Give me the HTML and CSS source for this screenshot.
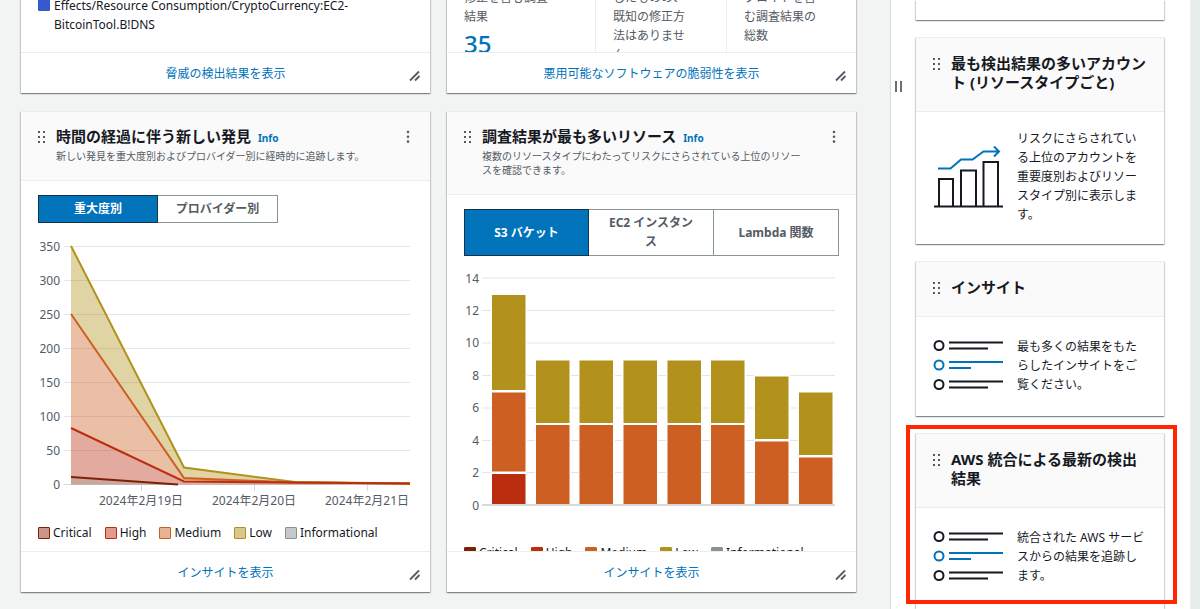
FILE: index.html
```html
<!DOCTYPE html>
<html lang="ja">
<head>
<meta charset="utf-8">
<title>Security Hub</title>
<link rel="stylesheet" href="styles.css">
</head>
<body>
<svg class="defs" aria-hidden="true">
  <symbol id="grip" viewBox="0 0 8 14">
    <path d="M0 1h2v2H0zM5 1h2v2H5zM0 6h2v2H0zM5 6h2v2H5zM0 11h2v2H0zM5 11h2v2H5z"/>
  </symbol>
  <symbol id="dots" viewBox="0 0 4 14">
    <circle cx="2" cy="2" r="1.300"/><circle cx="2" cy="6.800" r="1.300"/><circle cx="2" cy="11.600" r="1.300"/>
  </symbol>
  <symbol id="resize" viewBox="0 0 12 12">
    <path d="M1 10.500 10 1.500M6 10.500 10.500 6" fill="none" stroke="#545b64" stroke-width="1.800"/>
  </symbol>
  <symbol id="list" viewBox="0 0 70 62">
    <g fill="none" stroke-width="2">
      <g stroke="#16191f"><circle cx="6" cy="11.500" r="4.500"/><path d="M16 8.500h54M16 14.500h39"/><circle cx="6" cy="50.500" r="4.500"/><path d="M16 47.500h54M16 53.500h39"/></g>
      <g stroke="#0073bb"><circle cx="6" cy="31" r="4.500"/><path d="M16 28h54M16 34h22"/></g>
    </g>
  </symbol>
</svg>
<div class="layout">
  <main class="main">
    <div class="board">
      <section class="card">
        <div class="card-body threat">
          <span class="swatch swatch-blue"></span>
          <p>Effects/Resource Consumption/CryptoCurrency:EC2-BitcoinTool.B!DNS</p>
        </div>
        <footer class="card-footer">
          <a href="#">脅威の検出結果を表示</a>
          <button class="resize" aria-label="サイズ変更"><svg width="12" height="12"><use href="#resize"/></svg></button>
        </footer>
      </section>

      <section class="card">
        <div class="card-body stats">
          <div class="stat"><p>修正を含む調査結果</p><strong>35</strong></div>
          <div class="stat"><p>したものの、既知の修正方法はありません</p></div>
          <div class="stat"><p>プロイトを含む調査結果の総数</p></div>
        </div>
        <footer class="card-footer">
          <a href="#">悪用可能なソフトウェアの脆弱性を表示</a>
          <button class="resize" aria-label="サイズ変更"><svg width="12" height="12"><use href="#resize"/></svg></button>
        </footer>
      </section>

      <section class="card">
        <header class="card-header">
          <button class="grip" aria-label="移動"><svg width="8" height="14"><use href="#grip"/></svg></button>
          <div class="heading">
            <h2>時間の経過に伴う新しい発見 <a class="info" href="#">Info</a></h2>
            <p>新しい発見を重大度別およびプロバイダー別に経時的に追跡します。</p>
          </div>
          <button class="menu" aria-label="メニュー"><svg width="4" height="14"><use href="#dots"/></svg></button>
        </header>
        <div class="card-body">
          <div class="segments segments-two">
            <button class="selected">重大度別</button><button>プロバイダー別</button>
          </div>
          <svg class="chart" viewBox="0 0 375 280">
            <g class="grid">
              <path d="M26 11.500H372M26 45.500H372M26 79.500H372M26 113.500H372M26 147.500H372M26 181.500H372M26 215.500H372"/>
              <path class="axis" d="M26 249.500H372M103.500 249V256M216.500 249V256M329.500 249V256"/>
            </g>
            <path d="M33 11 146 232.500 257 247 372 248.500V249H257L146 245 33 79Z" fill="#b2911c" opacity=".4"/>
            <path d="M33 79 146 243 257 247 372 248.500V249L146 246.500 33 193Z" fill="#cc5f21" opacity=".4"/>
            <path d="M33 193 146 246.500 372 248.500V249.500H140L33 242Z" fill="#ba2e0f" opacity=".4"/>
            <path d="M33 242 140 249.500H33Z" fill="#7d2105" opacity=".4"/>
            <g fill="none" stroke-width="2">
              <path d="M33 11 146 232.500 257 247 372 248.500" stroke="#b2911c"/>
              <path d="M33 79 146 243 257 247.500 372 248.500" stroke="#cc5f21"/>
              <path d="M33 242 140 249.500" stroke="#7d2105"/>
              <path d="M33 193 146 246.500 257 247.500 372 248.500" stroke="#ba2e0f"/>
            </g>
            <g class="labels" text-anchor="end">
              <text x="22" y="16">350</text><text x="22" y="50">300</text><text x="22" y="84">250</text><text x="22" y="118">200</text><text x="22" y="152">150</text><text x="22" y="186">100</text><text x="22" y="220">50</text><text x="22" y="254">0</text>
            </g>
            <g class="labels" text-anchor="middle">
              <text x="103" y="270">2024年2月19日</text><text x="216" y="270">2024年2月20日</text><text x="329" y="270">2024年2月21日</text>
            </g>
          </svg>
          <ul class="legend legend-outline">
            <li><span class="swatch critical"></span>Critical</li>
            <li><span class="swatch high"></span>High</li>
            <li><span class="swatch medium"></span>Medium</li>
            <li><span class="swatch low"></span>Low</li>
            <li><span class="swatch informational"></span>Informational</li>
          </ul>
        </div>
        <footer class="card-footer">
          <a href="#">インサイトを表示</a>
          <button class="resize" aria-label="サイズ変更"><svg width="12" height="12"><use href="#resize"/></svg></button>
        </footer>
      </section>

      <section class="card">
        <header class="card-header">
          <button class="grip" aria-label="移動"><svg width="8" height="14"><use href="#grip"/></svg></button>
          <div class="heading">
            <h2>調査結果が最も多いリソース <a class="info" href="#">Info</a></h2>
            <p>複数のリソースタイプにわたってリスクにさらされている上位のリソースを確認できます。</p>
          </div>
          <button class="menu" aria-label="メニュー"><svg width="4" height="14"><use href="#dots"/></svg></button>
        </header>
        <div class="card-body">
          <div class="segments">
            <button class="selected">S3 バケット</button><button>EC2 インスタンス</button><button>Lambda 関数</button>
          </div>
          <svg class="chart" viewBox="0 0 375 267">
            <g class="grid">
              <path d="M18 10H371M18 42.500H371M18 75H371M18 107.500H371M18 140H371M18 172.500H371M18 204.500H371"/>
              <path class="axis" d="M18 237H371" stroke-width="2"/>
            </g>
            <path fill="#fff" d="M27 26H63V236H27zM71 91H107V236H71zM115 91H151V236H115zM158 91H194V236H158zM202 91H238V236H202zM246 91H282V236H246zM290 107H326V236H290zM334 123H370V236H334z"/>
            <path fill="#b2911c" d="M28 27H61.500V122H28zM72 92.500H105.500V155H72zM115.500 92.500H149V155H115.500zM159.500 92.500H193V155H159.500zM203.500 92.500H237V155H203.500zM247 92.500H280.500V155H247zM291 108.500H324.500V171H291zM335 124.500H368.500V187H335z"/>
            <path fill="#cc5f21" d="M28 124.500H61.500V203.500H28zM72 157H105.500V236H72zM115.500 157H149V236H115.500zM159.500 157H193V236H159.500zM203.500 157H237V236H203.500zM247 157H280.500V236H247zM291 173.500H324.500V236H291zM335 189.500H368.500V236H335z"/>
            <path fill="#ba2e0f" d="M28 206H61.500V236H28z"/>
            <g class="labels" text-anchor="end">
              <text x="15" y="15">14</text><text x="15" y="47">12</text><text x="15" y="79">10</text><text x="15" y="112">8</text><text x="15" y="144">6</text><text x="15" y="177">4</text><text x="15" y="209">2</text><text x="15" y="242">0</text>
            </g>
          </svg>
          <ul class="legend">
            <li><span class="swatch critical"></span>Critical</li>
            <li><span class="swatch high"></span>High</li>
            <li><span class="swatch medium"></span>Medium</li>
            <li><span class="swatch low"></span>Low</li>
            <li><span class="swatch informational"></span>Informational</li>
          </ul>
        </div>
        <footer class="card-footer">
          <a href="#">インサイトを表示</a>
          <button class="resize" aria-label="サイズ変更"><svg width="12" height="12"><use href="#resize"/></svg></button>
        </footer>
      </section>
    </div>
  </main>

  <aside class="panel">
    <button class="splitter" aria-label="パネルのサイズ変更"></button>
    <div class="widgets">
      <section class="card stub"></section>
      <section class="card">
        <header class="card-header">
          <button class="grip" aria-label="移動"><svg width="8" height="14"><use href="#grip"/></svg></button>
          <h2>最も検出結果の多いアカウント (リソースタイプごと)</h2>
        </header>
        <div class="widget-body">
          <svg width="70" height="62" viewBox="0 0 70 62" fill="none" stroke-width="2">
            <path d="M1 60.500H70M6 60V33H20V60M28 60V24.500H43V60M50.500 60V16H65V60" stroke="#16191f"/>
            <path d="M5 22.500H17.500L28 13.500H39.500L50.500 5.500H65M61 .500 66 5.500 61 10.500" stroke="#0073bb"/>
          </svg>
          <p>リスクにさらされている上位のアカウントを重要度別およびリソースタイプ別に表示します。</p>
        </div>
      </section>
      <section class="card">
        <header class="card-header">
          <button class="grip" aria-label="移動"><svg width="8" height="14"><use href="#grip"/></svg></button>
          <h2>インサイト</h2>
        </header>
        <div class="widget-body">
          <svg width="70" height="62"><use href="#list"/></svg>
          <p>最も多くの結果をもたらしたインサイトをご覧ください。</p>
        </div>
      </section>
      <section class="card highlighted">
        <header class="card-header">
          <button class="grip" aria-label="移動"><svg width="8" height="14"><use href="#grip"/></svg></button>
          <h2>AWS 統合による最新の検出結果</h2>
        </header>
        <div class="widget-body">
          <svg width="70" height="62"><use href="#list"/></svg>
          <p>統合された AWS サービスからの結果を追跡します。</p>
        </div>
      </section>
    </div>
  </aside>
</div>
</body>
</html>
```
FILE: styles.css
```css
* { box-sizing: border-box; }
body {
  margin: 0;
  height: 100vh;
  overflow: hidden;
  background: #f2f3f3;
  color: #16191f;
  font: 12px/19px "Noto Sans", "Noto Sans CJK JP", sans-serif;
}
h2, p, ul { margin: 0; padding: 0; }
h2 { font-size: 15px; line-height: 19px; font-weight: 700; }
a { color: #0073bb; text-decoration: none; }
button { margin: 0; padding: 0; border: 0; background: none; color: inherit; font: inherit; }
svg { display: block; flex: none; }
.defs { position: absolute; width: 0; height: 0; }

.layout { display: flex; height: 100%; }
.main { flex: 1; min-width: 0; padding: 0 34px 0 21px; }
.board {
  display: grid;
  grid-template-columns: 1fr 1fr;
  grid-template-rows: 105px 481px;
  gap: 18px 17px;
  margin-top: -12px;
}

.card {
  display: flex;
  flex-direction: column;
  min-width: 0;
  background: #fff;
  box-shadow: 0 1px 1px rgba(0, 28, 36, .3), 1px 1px 1px rgba(0, 28, 36, .15), -1px 1px 1px rgba(0, 28, 36, .15);
}
.card-header {
  display: flex;
  gap: 10px;
  padding: 16px 17px 19px;
  border-top: 1px solid #eaeded;
  border-bottom: 1px solid #eaeded;
  background: #fafafa;
}
.board .card-header { padding: 15px 17px 17px; }
.grip { align-self: flex-start; width: 8px; padding-top: 3px; fill: #545b64; }
.menu { align-self: flex-start; padding: 3px; fill: #545b64; }
.heading { flex: 1; padding-right: 10px; }
.heading p { margin-top: 1px; color: #545b64; font-size: 10px; line-height: 14px; }
.info { margin-left: 3px; font-size: 10px; }

.card-body { flex: 1; min-height: 0; overflow: hidden; padding: 14px 17px 0; }
.card-footer {
  display: grid;
  grid-template-columns: 1fr auto 1fr;
  align-items: center;
  height: 41px;
  padding: 0 9px;
  border-top: 1px solid #eaeded;
}
.card-footer a { grid-column: 2; }
.resize { justify-self: end; align-self: end; margin-bottom: 11px; }

.swatch { display: block; flex: none; width: 12px; height: 12px; border: 1px solid; border-radius: 1px; }
.swatch-blue { margin-top: 3px; border: 0; background: #3759ce; }
.threat { display: flex; gap: 4px; padding: 8px 58px 0 17px; }
.stats { display: grid; grid-template-columns: 131px 131px 1fr; padding: 0 0 0 17px; color: #545b64; }
.stat { padding-right: 40px; }
.stat + .stat { padding: 0 36px 0 17px; border-left: 1px solid #eaeded; }
.stat strong { display: block; margin-top: 4px; color: #0073bb; font-size: 24px; line-height: 28px; font-weight: 500; }

.segments { display: grid; grid-template-columns: 1fr 1fr 1fr; }
.segments-two { width: 240px; grid-template-columns: 1fr 1fr; }
.segments button {
  padding: 3px 16px 4px;
  border: 1px solid #879596;
  background: #fff;
  color: #545b64;
  font-weight: 700;
}
.segments button + button { border-left: 0; }
.segments .selected { border-color: #16324a; background: #0073bb; color: #fff; }

.chart { width: 100%; height: auto; margin-top: 12px; }
.grid { fill: none; stroke: #e3e6e8; }
.axis { stroke: #d5dbdb; }
.labels { fill: #545b64; font-size: 12px; }

.legend { display: flex; gap: 13px; margin-top: 8px; list-style: none; }
.legend li { display: flex; align-items: center; gap: 3px; }
.critical { border-color: #7d2105; background: #7d2105; }
.high { border-color: #ba2e0f; background: #ba2e0f; }
.medium { border-color: #cc5f21; background: #cc5f21; }
.low { border-color: #b2911c; background: #b2911c; }
.informational { border-color: #879196; background: #879196; }
.legend-outline .critical { background: #c8968a; }
.legend-outline .high { background: #e19a8b; }
.legend-outline .medium { background: #e8b394; }
.legend-outline .low { background: #d8c88d; }
.legend-outline .informational { background: #c5c8cb; }

.panel {
  display: flex;
  align-items: flex-start;
  width: 310px;
  height: 100%;
  padding-right: 26px;
  border-left: 1px solid #d5dbdb;
  border-right: 10px solid #eaeded;
  background: #fff;
}
.splitter { width: 7px; height: 11px; margin: 81px 14px 0 4px; border: solid #687078; border-width: 0 2px; }
.widgets { display: flex; flex: 1; flex-direction: column; gap: 17px; min-width: 0; }
.stub { height: 20px; }
.widget-body { display: flex; align-items: center; gap: 14px; padding: 17px 16px 20px 17px; }
.highlighted { position: relative; }
.highlighted .widget-body { padding-bottom: 24px; }
.highlighted::after {
  content: "";
  position: absolute;
  inset: -8px -13px 7px -10px;
  border: 4px solid #ff2600;
  pointer-events: none;
}
```
